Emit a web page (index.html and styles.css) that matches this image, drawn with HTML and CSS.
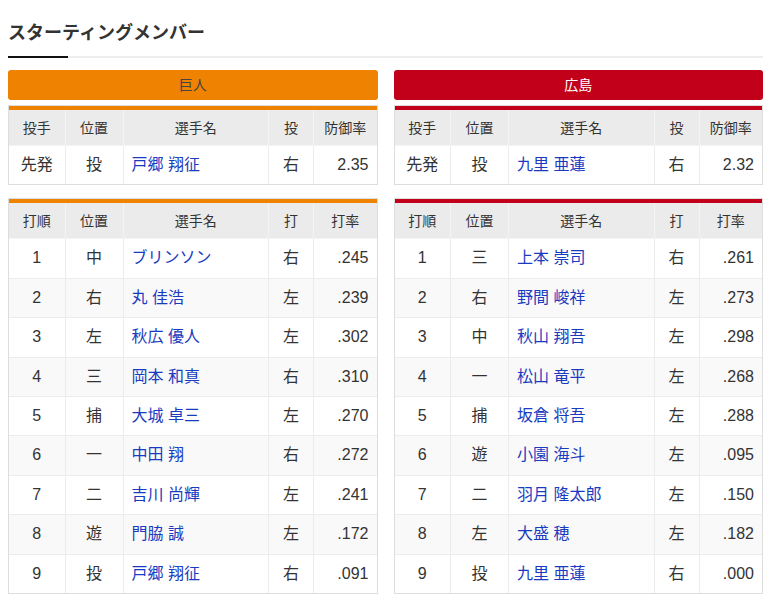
FILE: index.html
```html
<!DOCTYPE html>
<html lang="ja">
<head>
<meta charset="utf-8">
<title>スターティングメンバー</title>
<link rel="stylesheet" href="styles.css">
</head>
<body>
<div class="page">
  <h2 class="title">スターティングメンバー</h2>
  <div class="teams">
    <section class="team giants">
      <div class="team-name">巨人</div>
      <div class="box">
        <table class="tbl">
          <colgroup><col class="c1"><col class="c2"><col class="c3"><col class="c4"><col class="c5"></colgroup>
          <thead><tr><th>投手</th><th>位置</th><th>選手名</th><th>投</th><th>防御率</th></tr></thead>
          <tbody>
            <tr><td>先発</td><td>投</td><td class="name"><a href="#">戸郷 翔征</a></td><td>右</td><td class="num">2.35</td></tr>
          </tbody>
        </table>
      </div>
      <div class="box">
        <table class="tbl">
          <colgroup><col class="c1"><col class="c2"><col class="c3"><col class="c4"><col class="c5"></colgroup>
          <thead><tr><th>打順</th><th>位置</th><th>選手名</th><th>打</th><th>打率</th></tr></thead>
          <tbody>
            <tr><td>1</td><td>中</td><td class="name"><a href="#">ブリンソン</a></td><td>右</td><td class="num">.245</td></tr>
            <tr><td>2</td><td>右</td><td class="name"><a href="#">丸 佳浩</a></td><td>左</td><td class="num">.239</td></tr>
            <tr><td>3</td><td>左</td><td class="name"><a href="#">秋広 優人</a></td><td>左</td><td class="num">.302</td></tr>
            <tr><td>4</td><td>三</td><td class="name"><a href="#">岡本 和真</a></td><td>右</td><td class="num">.310</td></tr>
            <tr><td>5</td><td>捕</td><td class="name"><a href="#">大城 卓三</a></td><td>左</td><td class="num">.270</td></tr>
            <tr><td>6</td><td>一</td><td class="name"><a href="#">中田 翔</a></td><td>右</td><td class="num">.272</td></tr>
            <tr><td>7</td><td>二</td><td class="name"><a href="#">吉川 尚輝</a></td><td>左</td><td class="num">.241</td></tr>
            <tr><td>8</td><td>遊</td><td class="name"><a href="#">門脇 誠</a></td><td>左</td><td class="num">.172</td></tr>
            <tr><td>9</td><td>投</td><td class="name"><a href="#">戸郷 翔征</a></td><td>右</td><td class="num">.091</td></tr>
          </tbody>
        </table>
      </div>
    </section>
    <section class="team carp">
      <div class="team-name">広島</div>
      <div class="box">
        <table class="tbl">
          <colgroup><col class="c1"><col class="c2"><col class="c3"><col class="c4"><col class="c5"></colgroup>
          <thead><tr><th>投手</th><th>位置</th><th>選手名</th><th>投</th><th>防御率</th></tr></thead>
          <tbody>
            <tr><td>先発</td><td>投</td><td class="name"><a href="#">九里 亜蓮</a></td><td>右</td><td class="num">2.32</td></tr>
          </tbody>
        </table>
      </div>
      <div class="box">
        <table class="tbl">
          <colgroup><col class="c1"><col class="c2"><col class="c3"><col class="c4"><col class="c5"></colgroup>
          <thead><tr><th>打順</th><th>位置</th><th>選手名</th><th>打</th><th>打率</th></tr></thead>
          <tbody>
            <tr><td>1</td><td>三</td><td class="name"><a href="#">上本 崇司</a></td><td>右</td><td class="num">.261</td></tr>
            <tr><td>2</td><td>右</td><td class="name"><a href="#">野間 峻祥</a></td><td>左</td><td class="num">.273</td></tr>
            <tr><td>3</td><td>中</td><td class="name"><a href="#">秋山 翔吾</a></td><td>左</td><td class="num">.298</td></tr>
            <tr><td>4</td><td>一</td><td class="name"><a href="#">松山 竜平</a></td><td>左</td><td class="num">.268</td></tr>
            <tr><td>5</td><td>捕</td><td class="name"><a href="#">坂倉 将吾</a></td><td>左</td><td class="num">.288</td></tr>
            <tr><td>6</td><td>遊</td><td class="name"><a href="#">小園 海斗</a></td><td>左</td><td class="num">.095</td></tr>
            <tr><td>7</td><td>二</td><td class="name"><a href="#">羽月 隆太郎</a></td><td>左</td><td class="num">.150</td></tr>
            <tr><td>8</td><td>左</td><td class="name"><a href="#">大盛 穂</a></td><td>左</td><td class="num">.182</td></tr>
            <tr><td>9</td><td>投</td><td class="name"><a href="#">九里 亜蓮</a></td><td>右</td><td class="num">.000</td></tr>
          </tbody>
        </table>
      </div>
    </section>
  </div>
</div>
</body>
</html>
```
FILE: styles.css
```css
html, body {
  margin: 0;
  padding: 0;
  background: #fff;
}
body {
  font-family: "Liberation Sans", "Noto Sans CJK JP", sans-serif;
  color: #333;
}
.page {
  padding: 20px 7px 8px 8px;
}
.title {
  position: relative;
  margin: 0 0 12px;
  padding: 0 0 9px;
  font-size: 18px;
  line-height: 27px;
  font-weight: bold;
  color: #333;
  border-bottom: 2px solid #eeeeee;
}
.title::after {
  content: "";
  position: absolute;
  left: 0;
  bottom: -2px;
  width: 60px;
  height: 2px;
  background: #111;
}
.teams {
  display: grid;
  grid-template-columns: 1fr 1fr;
  column-gap: 16px;
}
.team-name {
  height: 30px;
  line-height: 30px;
  text-align: center;
  font-size: 14px;
  border-radius: 3px;
  margin-bottom: 5px;
}
.giants .team-name {
  background: #ef8200;
  color: #444;
}
.carp .team-name {
  background: #c3001a;
  color: #fff;
}
.box {
  border: 1px solid #dddddd;
  margin-bottom: 13px;
  padding-top: 4px;
}
.giants .box { box-shadow: inset 0 4px 0 #ef8200; }
.carp .box { box-shadow: inset 0 4px 0 #c3001a; }
.tbl {
  width: 100%;
  border-collapse: collapse;
  border-style: hidden;
  table-layout: fixed;
  font-size: 16px;
}
.c1 { width: 56px; }
.c2 { width: 58px; }
.c4 { width: 45px; }
.c5 { width: 63px; }
.tbl th {
  background: #ebebeb;
  font-weight: normal;
  font-size: 14px;
  line-height: 20px;
  padding: 8px 0 7px;
  border: 1px solid #f4f4f4;
  border-top: none;
  color: #333;
}
.tbl td {
  text-align: center;
  line-height: 22px;
  padding: 8px 0 8.4px;
  border: 1px solid #ececec;
  color: #333;
}
.tbl tbody tr:nth-child(even) td {
  background: #f9f9f9;
}
.tbl td.name {
  text-align: left;
  padding-left: 8px;
}
.tbl td.num {
  text-align: right;
  padding-right: 8px;
}
.tbl a {
  color: #1a3bbf;
  text-decoration: none;
}
```
